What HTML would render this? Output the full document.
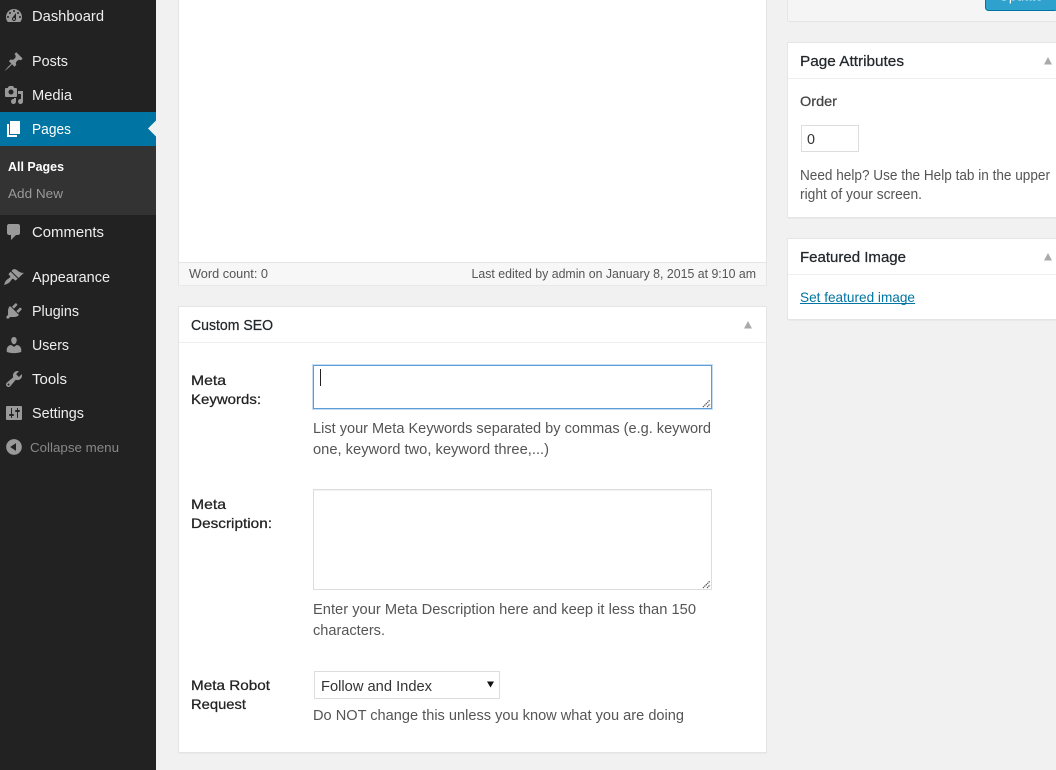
<!DOCTYPE html>
<html><head><meta charset="utf-8"><title>Edit Page</title>
<style>
html,body{margin:0;padding:0;background:#f1f1f1;width:1056px;height:770px;overflow:hidden}
svg{display:block}
text{font-family:"Liberation Sans",sans-serif;font-size:14px;white-space:pre}
.m{fill:#eee;font-size:14.5px}
.l{fill:#222;stroke:#222;stroke-width:.25;font-size:14px}
.h{fill:#23282d;stroke:#23282d;stroke-width:.25;font-size:14.5px}
.d{fill:#555;font-size:14.5px}
.i{fill:#999}
</style></head><body>
<svg width="1056" height="770" viewBox="0 0 1056 770" xmlns="http://www.w3.org/2000/svg">
<rect width="1056" height="770" fill="#f1f1f1"/>
<!-- sidebar -->
<rect width="156" height="770" fill="#222"/>
<rect y="112" width="156" height="34" fill="#0074a2"/>
<rect y="146" width="156" height="69" fill="#333"/>
<path d="M156 120.500l-8 8 8 8z" fill="#f1f1f1"/>
<g class="i">
<path transform="translate(4,6)" d="M3.760 16h12.480c1.100-1.370 1.760-3.110 1.760-5 0-4.420-3.580-8-8-8s-8 3.580-8 8c0 1.890.66 3.630 1.760 5zM10 4c.55 0 1 .45 1 1s-.45 1-1 1-1-.45-1-1 .45-1 1-1zM6 6c.55 0 1 .45 1 1s-.45 1-1 1-1-.45-1-1 .45-1 1-1zm8 0c.55 0 1 .45 1 1s-.45 1-1 1-1-.45-1-1 .45-1 1-1zm-5.370 5.550L12 7v6c0 1.100-.9 2-2 2s-2-.9-2-2c0-.57.24-1.080.63-1.450zM4 10c.55 0 1 .45 1 1s-.45 1-1 1-1-.45-1-1 .45-1 1-1zm12 0c.55 0 1 .45 1 1s-.45 1-1 1-1-.45-1-1 .45-1 1-1zm-5 3c0-.55-.45-1-1-1s-1 .45-1 1 .45 1 1 1 1-.45 1-1z" fill-rule="evenodd"/>
<path transform="translate(4,51)" d="M10.440 3.020l1.820-1.820 6.360 6.350-1.830 1.820c-1.050-.68-2.480-.57-3.410.36l-.75.75c-.92.93-1.040 2.350-.35 3.410l-1.830 1.820-2.410-2.410-2.890 2.890c-1.950 1.950-4.530 3.800-4.530 3.800s1.850-2.580 3.800-4.530l2.890-2.890-2.410-2.410 1.830-1.830c1.050.69 2.480.57 3.410-.35l.75-.75c.93-.93 1.040-2.350.36-3.410z"/>
<path transform="translate(4,85)" fill-rule="evenodd" d="M13 11V4c0-.55-.45-1-1-1h-1.670L9 1H5L3.670 3H2c-.55 0-1 .45-1 1v7c0 .55.45 1 1 1h10c.55 0 1-.45 1-1zM7 4.500c1.380 0 2.500 1.120 2.500 2.500S8.380 9.500 7 9.500 4.500 8.380 4.500 7 5.620 4.500 7 4.500zM14 6h5v10.500c0 1.380-1.120 2.500-2.500 2.500S14 17.880 14 16.500s1.120-2.500 2.500-2.500c.17 0 .34.02.5.05V9h-3V6zm-4 8.050V13h2v3.500c0 1.380-1.120 2.500-2.500 2.500S7 17.880 7 16.500 8.120 14 9.500 14c.17 0 .34.02.5.05z"/>
<path transform="translate(4,119)" style="fill:#fff" d="M6 15V2h10v13H6zm-1 1h8v2H3V5h2v11z"/>
<path transform="translate(4,222)" d="M5 2h9c1.100 0 2 .9 2 2v7c0 1.100-.9 2-2 2h-2l-5 5v-5H5c-1.100 0-2-.9-2-2V4c0-1.100.9-2 2-2z"/>
<path transform="translate(4,267)" d="M14.480 11.060L7.410 3.990l1.500-1.500c.5-.56 2.300-.47 3.510.32 1.210.8 1.430 1.280 2.910 2.110 1.180.64 2.450 1.260 4.670.85zm-.71.71L6.700 4.700 4.930 6.470c-.39.39-.39 1.020 0 1.410l1.060 1.060c.39.39.39 1.030 0 1.420-.6.6-1.430 1.110-2.210 1.690-.35.26-.7.53-1.010.84C1.430 13.710.8 16.060 0 18c1.940-.8 4.290-1.430 5.610-2.770.31-.31.58-.66.84-1.010.58-.78 1.090-1.610 1.690-2.210.39-.39 1.030-.39 1.420 0l1.060 1.060c.39.39 1.020.39 1.410 0z"/>
<path transform="translate(4,301)" d="M13.110 4.360L9.870 7.600 8 5.730l3.240-3.240c.35-.34 1.050-.2 1.560.32.52.51.66 1.210.31 1.550zm-8 1.770l.91-1.120 9.010 9.010-1.190.84c-.71.71-2.630 1.160-3.820 1.160H6.140L4.900 17.260c-.59.59-1.540.59-2.120 0-.59-.58-.59-1.530 0-2.120l1.240-1.240v-3.880c0-1.130.4-3.190 1.090-3.890zm7.260 3.970l3.240-3.240c.34-.35 1.040-.21 1.550.31.52.51.66 1.210.31 1.550l-3.240 3.250z"/>
<path transform="translate(4,335)" d="M10 9.250c-2.270 0-2.730-3.440-2.730-3.440C7 4.020 7.820 2 9.970 2c2.160 0 2.980 2.020 2.710 3.810 0 0-.41 3.440-2.680 3.440zm0 2.570L12.720 10c2.390 0 4.520 2.330 4.520 4.530v2.490s-3.650 1.130-7.240 1.130c-3.650 0-7.240-1.130-7.240-1.130v-2.490c0-2.250 1.940-4.480 4.470-4.480z"/>
<path transform="translate(4,369)" fill-rule="evenodd" d="M16.680 9.770c-1.340 1.340-3.300 1.670-4.950.99l-5.410 6.520c-.99.99-2.590.99-3.580 0s-.99-2.590 0-3.570l6.520-5.420c-.68-1.650-.35-3.610.99-4.950 1.280-1.280 3.120-1.620 4.720-1.060l-2.890 2.890 2.820 2.820 2.860-2.870c.53 1.580.18 3.390-1.080 4.650zM3.810 16.210c.4.39 1.040.39 1.430 0 .4-.4.4-1.040 0-1.430-.39-.4-1.030-.4-1.430 0-.39.39-.39 1.030 0 1.430z"/>
<path transform="translate(4,403)" fill-rule="evenodd" d="M18 16V4c0-.55-.45-1-1-1H3c-.55 0-1 .45-1 1v12c0 .55.45 1 1 1h14c.55 0 1-.45 1-1zM8 11h1c.55 0 1 .45 1 1s-.45 1-1 1H8v1.500c0 .28-.22.5-.5.5s-.5-.22-.5-.5V13H6c-.55 0-1-.45-1-1s.45-1 1-1h1V5.500c0-.28.22-.5.5-.5s.5.22.5.5V11zm5-2h-1c-.55 0-1-.45-1-1s.45-1 1-1h1V5.500c0-.28.22-.5.5-.5s.5.22.5.5V7h1c.55 0 1 .45 1 1s-.45 1-1 1h-1v5.500c0 .28-.22.5-.5.5s-.5-.22-.5-.5V9z"/>
<path transform="translate(4,437)" fill-rule="evenodd" d="M10 2.160c4.330 0 7.840 3.510 7.840 7.840s-3.510 7.840-7.840 7.840S2.160 14.330 2.160 10 5.710 2.160 10 2.160zm2 11.720V6.120L6.180 9.970z"/>
</g>
<text class="m" x="32" y="21" textLength="72" lengthAdjust="spacingAndGlyphs">Dashboard</text>
<text class="m" x="32" y="66" textLength="36" lengthAdjust="spacingAndGlyphs">Posts</text>
<text class="m" x="32" y="100" textLength="40" lengthAdjust="spacingAndGlyphs">Media</text>
<text class="m" x="32" y="134" textLength="39" lengthAdjust="spacingAndGlyphs" style="fill:#fff">Pages</text>
<text x="8" y="171" textLength="56" lengthAdjust="spacingAndGlyphs" style="fill:#fff;font-weight:bold;font-size:13px">All Pages</text>
<text x="8" y="198" textLength="55" lengthAdjust="spacingAndGlyphs" style="fill:#999;font-size:13px">Add New</text>
<text class="m" x="32" y="237" textLength="72" lengthAdjust="spacingAndGlyphs">Comments</text>
<text class="m" x="32" y="282" textLength="78" lengthAdjust="spacingAndGlyphs">Appearance</text>
<text class="m" x="32" y="316" textLength="47" lengthAdjust="spacingAndGlyphs">Plugins</text>
<text class="m" x="32" y="350" textLength="37" lengthAdjust="spacingAndGlyphs">Users</text>
<text class="m" x="32" y="384" textLength="35" lengthAdjust="spacingAndGlyphs">Tools</text>
<text class="m" x="32" y="418" textLength="52" lengthAdjust="spacingAndGlyphs">Settings</text>
<text x="30" y="452" textLength="89" lengthAdjust="spacingAndGlyphs" style="fill:#888;font-size:13px">Collapse menu</text>

<!-- editor box -->
<rect x="178.500" y="-2" width="588" height="287" fill="#fff" stroke="#e5e5e5"/>
<rect x="179" y="263" width="587" height="22" fill="#f7f7f7"/>
<line x1="179" x2="766" y1="262.500" y2="262.500" stroke="#e5e5e5"/>
<line x1="179" x2="767" y1="285.500" y2="285.500" stroke="#e9e9e9"/>
<text x="189" y="278" textLength="79" lengthAdjust="spacingAndGlyphs" style="fill:#555;font-size:12.500px">Word count: 0</text>
<text x="471.500" y="278" textLength="284.500" lengthAdjust="spacingAndGlyphs" style="fill:#555;font-size:12.500px">Last edited by admin on January 8, 2015 at 9:10 am</text>

<!-- custom seo -->
<rect x="178.500" y="306.500" width="588" height="446" fill="#fff" stroke="#e5e5e5"/>
<line x1="179" x2="767" y1="753.500" y2="753.500" stroke="#e9e9e9"/>
<line x1="179" x2="766" y1="342.500" y2="342.500" stroke="#eee"/>
<text class="h" x="191" y="330" textLength="82" lengthAdjust="spacingAndGlyphs">Custom SEO</text>
<path d="M744 328.500l4-7.500 4 7.500z" fill="#aaa"/>

<text class="l" x="191" y="385" textLength="35" lengthAdjust="spacingAndGlyphs">Meta</text>
<text class="l" x="191" y="404" textLength="70" lengthAdjust="spacingAndGlyphs">Keywords:</text>
<rect x="313.500" y="365.500" width="398" height="43" fill="#fff" stroke="#5b9dd9"/>
<rect x="312.500" y="364.500" width="400" height="45" fill="none" stroke="#5b9dd9" stroke-opacity=".35"/>
<line x1="320.500" x2="320.500" y1="369" y2="386" stroke="#222"/>
<path d="M703 407l7-7M707 407l3-3" stroke="#555" stroke-width="1.200" stroke-dasharray="1.400 .6" fill="none"/>
<text class="d" x="313" y="433" textLength="398" lengthAdjust="spacingAndGlyphs">List your Meta Keywords separated by commas (e.g. keyword</text>
<text class="d" x="313" y="454" textLength="236" lengthAdjust="spacingAndGlyphs">one, keyword two, keyword three,...)</text>

<text class="l" x="191" y="509" textLength="35" lengthAdjust="spacingAndGlyphs">Meta</text>
<text class="l" x="191" y="528" textLength="81" lengthAdjust="spacingAndGlyphs">Description:</text>
<rect x="313.500" y="489.500" width="398" height="100" fill="#fff" stroke="#ddd"/>
<line x1="314" x2="711" y1="490.500" y2="490.500" stroke="#f3f3f3"/>
<path d="M703 588l7-7M707 588l3-3" stroke="#555" stroke-width="1.200" stroke-dasharray="1.400 .6" fill="none"/>
<text class="d" x="313" y="614" textLength="383" lengthAdjust="spacingAndGlyphs">Enter your Meta Description here and keep it less than 150</text>
<text class="d" x="313" y="635" textLength="72" lengthAdjust="spacingAndGlyphs">characters.</text>

<text class="l" x="191" y="690" textLength="79" lengthAdjust="spacingAndGlyphs">Meta Robot</text>
<text class="l" x="191" y="709" textLength="55" lengthAdjust="spacingAndGlyphs">Request</text>
<rect x="314.500" y="671.500" width="185" height="27" fill="#fff" stroke="#ddd"/>
<text x="321" y="691" textLength="111" lengthAdjust="spacingAndGlyphs" style="fill:#333;font-size:14.500px">Follow and Index</text>
<path d="M487 681.500h7l-3.500 6z" fill="#111"/>
<text class="d" x="313" y="720" textLength="371" lengthAdjust="spacingAndGlyphs">Do NOT change this unless you know what you are doing</text>

<!-- publish box -->
<rect x="788" y="-2" width="270" height="23" fill="#f5f5f5"/>
<line x1="787.500" x2="787.500" y1="0" y2="21" stroke="#e5e5e5"/>
<line x1="788" x2="1056" y1="21.500" y2="21.500" stroke="#e5e5e5"/>
<rect x="985.500" y="-6" width="72" height="16.500" rx="3" fill="#2ea2cc" stroke="#0074a2"/>
<text x="999" y="0.500" textLength="44" lengthAdjust="spacingAndGlyphs" style="fill:#fff;font-size:14px">Update</text>

<!-- page attributes -->
<rect x="787.500" y="42.500" width="270" height="175" fill="#fff" stroke="#e5e5e5"/>
<line x1="788" x2="1056" y1="218.500" y2="218.500" stroke="#e9e9e9"/>
<line x1="788" x2="1056" y1="78.500" y2="78.500" stroke="#eee"/>
<text class="h" x="800" y="66" textLength="104" lengthAdjust="spacingAndGlyphs">Page Attributes</text>
<path d="M1044 64.500l4-7.500 4 7.500z" fill="#aaa"/>
<text class="l" x="800" y="106" textLength="37" lengthAdjust="spacingAndGlyphs" style="fill:#444;stroke:#444">Order</text>
<rect x="801.500" y="125.500" width="57" height="26" fill="#fff" stroke="#ddd"/>
<text x="807" y="144" textLength="8" lengthAdjust="spacingAndGlyphs" style="fill:#333;font-size:14.500px">0</text>
<text class="d" x="800" y="180" textLength="250" lengthAdjust="spacingAndGlyphs">Need help? Use the Help tab in the upper</text>
<text class="d" x="800" y="199" textLength="122" lengthAdjust="spacingAndGlyphs">right of your screen.</text>

<!-- featured image -->
<rect x="787.500" y="238.500" width="270" height="81" fill="#fff" stroke="#e5e5e5"/>
<line x1="788" x2="1056" y1="320.500" y2="320.500" stroke="#e9e9e9"/>
<line x1="788" x2="1056" y1="274.500" y2="274.500" stroke="#eee"/>
<text class="h" x="800" y="262" textLength="106" lengthAdjust="spacingAndGlyphs">Featured Image</text>
<path d="M1044 260.500l4-7.500 4 7.500z" fill="#aaa"/>
<text x="800" y="302" textLength="115" lengthAdjust="spacingAndGlyphs" style="fill:#0074a2;font-size:14px">Set featured image</text>
<line x1="800" x2="915" y1="303.500" y2="303.500" stroke="#0074a2"/>
</svg>
</body></html>
